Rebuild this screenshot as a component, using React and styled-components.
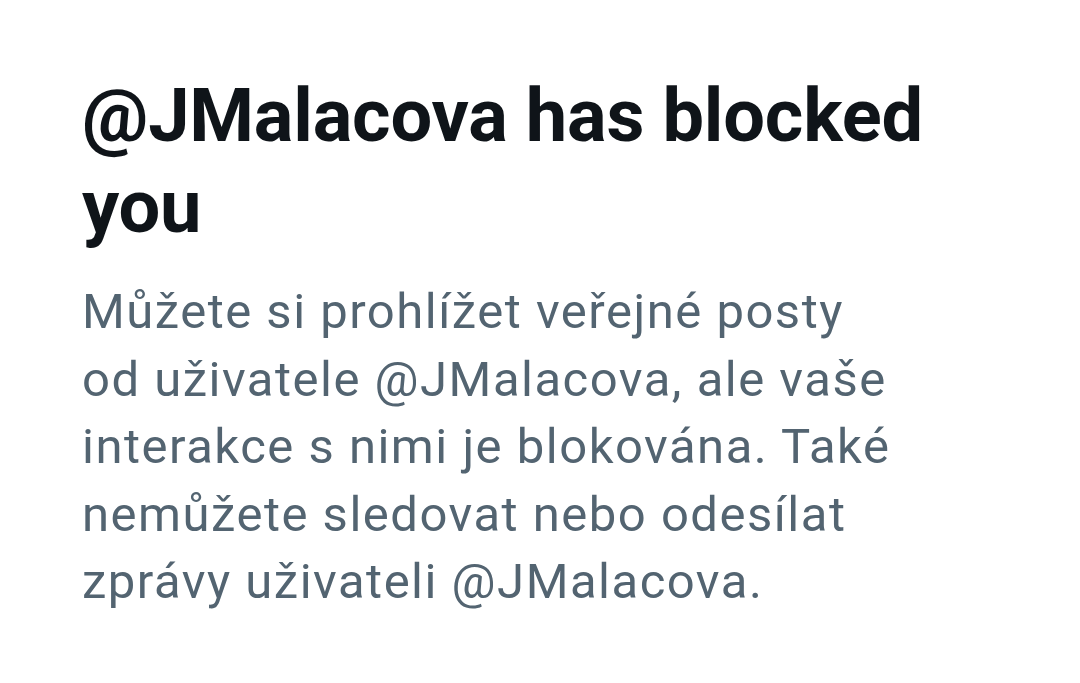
import React from 'react'
import styled, { createGlobalStyle } from 'styled-components'

const GlobalStyle = createGlobalStyle`
  html, body {
    margin: 0;
    padding: 0;
    background: #ffffff;
  }
`

const Page = styled.div`
  width: 1080px;
  height: 683px;
  box-sizing: border-box;
  padding: 70px 80px 0 82px;
  font-family: Roboto, 'Liberation Sans', Arial, sans-serif;
  display: flex;
  flex-direction: column;
  gap: 26px;
`

const Title = styled.h1`
  margin: 0;
  font-size: 74px;
  line-height: 91px;
  font-weight: 700;
  letter-spacing: -0.2px;
  color: #0f1419;
`

const Body = styled.p`
  margin: 0;
  font-size: 49px;
  line-height: 67.5px;
  letter-spacing: 1.5px;
  color: #536471;
`

const Line = styled.span`
  display: block;
  white-space: nowrap;
`

const lines = [
  'Můžete si prohlížet veřejné posty',
  'od uživatele @JMalacova, ale vaše',
  'interakce s nimi je blokována. Také',
  'nemůžete sledovat nebo odesílat',
  'zprávy uživateli @JMalacova.',
]

const App = () => {
  return (
    <>
      <GlobalStyle />
      <Page>
        <Title>
          <Line>@JMalacova has blocked</Line>
          <Line>you</Line>
        </Title>
        <Body>
          {lines.map((l) => (
            <Line key={l}>{l}</Line>
          ))}
        </Body>
      </Page>
    </>
  )
}

export default App
